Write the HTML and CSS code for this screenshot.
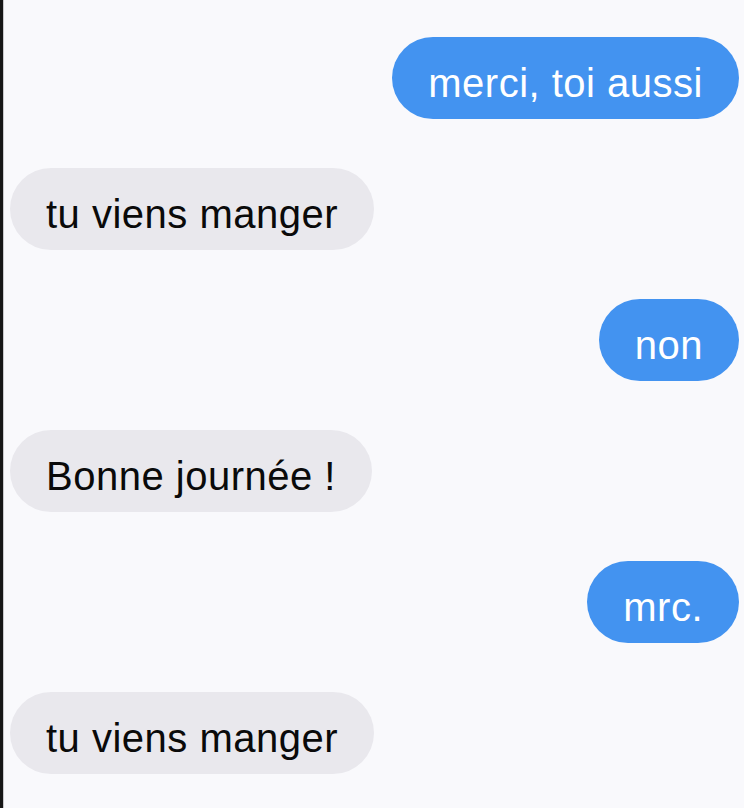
FILE: index.html
```html
<!DOCTYPE html>
<html lang="fr">
<head>
<meta charset="utf-8">
<link rel="stylesheet" href="styles.css">
</head>
<body>
<div class="screen">
  <div class="edge"></div>
  <div class="chat">
    <div class="row out"><div class="bubble blue">merci, toi aussi</div></div>
    <div class="row in"><div class="bubble gray">tu viens manger</div></div>
    <div class="row out"><div class="bubble blue">non</div></div>
    <div class="row in"><div class="bubble gray">Bonne journée !</div></div>
    <div class="row out"><div class="bubble blue">mrc.</div></div>
    <div class="row in"><div class="bubble gray">tu viens manger</div></div>
  </div>
</div>
</body>
</html>
```

FILE: styles.css
```css
html, body {
  margin: 0;
  padding: 0;
  background: #f9f9fc;
}
.screen {
  display: flex;
  width: 744px;
  height: 808px;
  overflow: hidden;
}
.edge {
  width: 3px;
  flex: none;
  background: #161616;
  border-right: 1px solid #c9c9cc;
}
.chat {
  flex: 1;
  display: flex;
  flex-direction: column;
  gap: 49px;
  padding: 37px 5px 0 6px;
}
.row {
  display: flex;
}
.row.out {
  justify-content: flex-end;
}
.row.in {
  justify-content: flex-start;
}
.bubble {
  height: 82px;
  box-sizing: border-box;
  border-radius: 41px;
  padding: 10px 36px 0 36px;
  display: flex;
  align-items: center;
  font-family: "Liberation Sans", Arial, sans-serif;
  font-size: 40px;
  letter-spacing: 0.5px;
  white-space: nowrap;
}
.blue {
  background: #4393f0;
  color: #ffffff;
}
.gray {
  background: #e9e8ed;
  color: #0a0a0a;
}
```
